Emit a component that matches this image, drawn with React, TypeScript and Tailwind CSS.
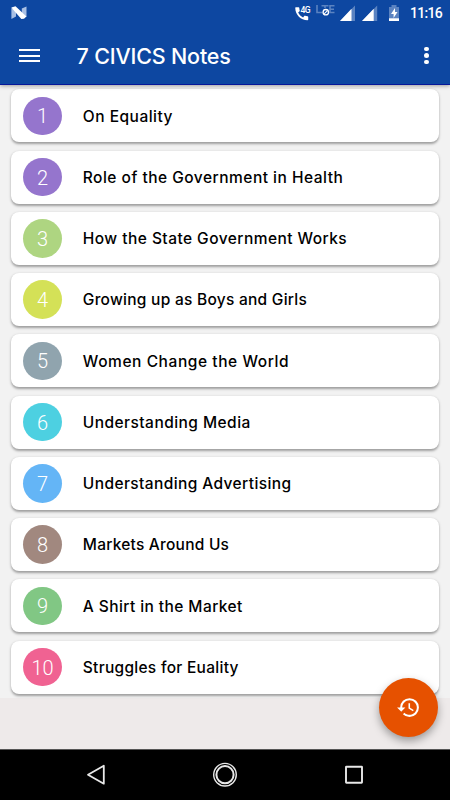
import React from "react";

const rows = [
  { title: "On Equality", color: "bg-[#9575cd]", spacing: "tracking-[0.50px]" },
  { title: "Role of the Government in Health", color: "bg-[#9575cd]", spacing: "tracking-[0.49px]" },
  { title: "How the State Government Works", color: "bg-[#aed581]", spacing: "tracking-[0.45px]" },
  { title: "Growing up as Boys and Girls", color: "bg-[#d4e157]", spacing: "tracking-[0.26px]" },
  { title: "Women Change the World", color: "bg-[#90a4ae]", spacing: "tracking-[0.57px]" },
  { title: "Understanding Media", color: "bg-[#4dd0e1]", spacing: "tracking-[0.45px]" },
  { title: "Understanding Advertising", color: "bg-[#64b5f6]", spacing: "tracking-[0.40px]" },
  { title: "Markets Around Us", color: "bg-[#a1887f]", spacing: "tracking-[0.23px]" },
  { title: "A Shirt in the Market", color: "bg-[#81c784]", spacing: "tracking-[0.42px]" },
  { title: "Struggles for Euality", color: "bg-[#f06292]", spacing: "tracking-[0.28px]" },
];

function StatusIcons() {
  return (
    <svg className="block h-[27px] w-[120px]" viewBox="290 0 120 27">
      <path transform="translate(293.1 5.2) scale(.72)" fill="#fff" d="M20.01 15.38c-1.23 0-2.42-.2-3.53-.56-.35-.12-.74-.03-1.01.24l-1.57 1.97c-2.83-1.35-5.48-3.9-6.89-6.83l1.95-1.66c.27-.28.35-.67.24-1.02-.37-1.11-.56-2.3-.56-3.53 0-.54-.45-.99-.99-.99H4.19C3.65 3 3 3.24 3 3.99 3 13.28 10.73 21 20.01 21c.71 0 .99-.63.99-1.18v-3.45c0-.54-.45-.99-.99-.99z" />
      <text x="300.5" y="12.800" fill="#fff" fontFamily="Roboto, sans-serif" fontSize="8.6" fontWeight="500" textLength="10">4G</text>
      <path d="M317 5v7.500h5.500M321.500 5.700h7M325 5.700V8M334.500 5.700h-4.500v6.800h4.500M330 9.200h4" fill="none" stroke="#5b83c1" strokeWidth="1.600" />
      <circle cx="325.800" cy="12.200" r="2.700" fill="#0d47a1" stroke="#fff" strokeWidth="1.300" />
      <path d="m324.200 13.800 3.200-3.200" stroke="#fff" strokeWidth="1.100" />
      <path d="M355 5.500V21H340z M377.200 5.500V21H362z" fill="#5b83c1" />
      <path d="M340 21 351.500 8.800V21z M362 21 373.700 8.800V21z" fill="#fff" />
      <path d="M389 7h2.500V5h5v2h2.500v11h-10z" fill="#5b83c1" />
      <path d="M389 18.200h10V21h-10z" fill="#fff" />
      <path d="m395 8-4 6h2.600v4l3.900-6H395z" fill="#fff" />
    </svg>
  );
}

export default function App() {
  return (
    <div className="relative flex h-[800px] w-[450px] flex-col overflow-hidden bg-[#eeeaea] font-['Inter',sans-serif]">
      <header className="relative z-10 flex h-[85px] shrink-0 flex-col border-b border-[#06179a] bg-[#0d47a1] text-white shadow-[0_1px_4px_rgba(0,0,0,0.35)]">
        <div className="flex h-[27px] shrink-0 items-start pl-[11px]">
          <svg className="mt-[6px] block h-[14px] w-[16px]" viewBox="0 0 16 14">
            <path d="M.4 2v11L5 10.500V4zM10.800 2.500 15.500.600V11L10.800 9z" fill="#a9c0e4" />
            <path d="M.300 1.600 4.500.200 15.400 10.500 13 12.800 10.300 13z" fill="#fff" />
          </svg>
          <div className="ml-auto">
            <StatusIcons />
          </div>
          <div className="mt-[5px] w-[40px] whitespace-nowrap font-['Roboto',sans-serif] text-[14px] font-medium leading-[17px] tracking-[-0.7px]">11:16</div>
        </div>
        <div className="flex h-[57px] items-center pl-[19px]">
          <div className="flex w-[21px] flex-col gap-[3.600px]">
            <div className="h-[2px] bg-white" />
            <div className="h-[2px] bg-white" />
            <div className="h-[2px] bg-white" />
          </div>
          <h1 className="ml-[36.500px] whitespace-nowrap text-[21.500px] font-medium leading-[28px] tracking-[-0.18px]">7 CIVICS Notes</h1>
          <div className="ml-auto mr-[21px] flex flex-col gap-[2px]">
            <div className="size-[4.600px] rounded-full bg-white" />
            <div className="size-[4.600px] rounded-full bg-white" />
            <div className="size-[4.600px] rounded-full bg-white" />
          </div>
        </div>
      </header>
      <main className="flex h-[613px] shrink-0 flex-col gap-[8.250px] bg-[#f2f2f2] px-[11px] pt-[4.300px]">
        {rows.map((row, i) => (
          <div key={row.title} className="flex h-[53px] shrink-0 items-center rounded-[8px] bg-white pl-[12.300px] shadow-[0_1.500px_2.500px_rgba(0,0,0,0.35)]">
            <div className={`flex size-[38.500px] items-center justify-center rounded-full pt-px font-['Roboto',sans-serif] text-[20px] font-light text-white ${row.color}`}>{i + 1}</div>
            <span className={`ml-[21px] whitespace-nowrap pt-[1.500px] text-[15.500px] font-medium leading-[22px] text-black ${row.spacing}`}>{row.title}</span>
          </div>
        ))}
      </main>
      <nav className="mt-auto flex h-[51px] items-center bg-black">
        <svg className="block h-[51px] w-[450px]" viewBox="0 749 450 51" fill="none" stroke="#e8e8e8">
          <path d="M0 749.500h450" stroke="#555" />
          <path d="m88 774.700 15.800-9v18z" strokeWidth="1.800" strokeLinejoin="round" />
          <circle cx="225" cy="774.700" r="11.300" strokeWidth="1.400" />
          <circle cx="225" cy="774.700" r="8.600" strokeWidth="2" />
          <rect x="346" y="766.700" width="16" height="16" strokeWidth="1.900" rx=".4" />
        </svg>
      </nav>
      <button className="absolute left-[379px] top-[678px] z-20 flex size-[59px] items-center justify-center rounded-full bg-[#e65100] shadow-[0_4px_8px_rgba(0,0,0,0.35)]">
        <svg className="size-[25px]" viewBox="0 0 24 24" fill="#fff">
          <path d="M13 3a9 9 0 0 0-9 9H1l3.890 3.890.07.14L9 12H6c0-3.870 3.130-7 7-7s7 3.130 7 7-3.130 7-7 7c-1.930 0-3.680-.79-4.940-2.060l-1.420 1.420A8.954 8.954 0 0 0 13 21a9 9 0 0 0 0-18zm-1 5v5l4.280 2.540.72-1.210-3.500-2.080V8H12z" />
        </svg>
      </button>
    </div>
  );
}
